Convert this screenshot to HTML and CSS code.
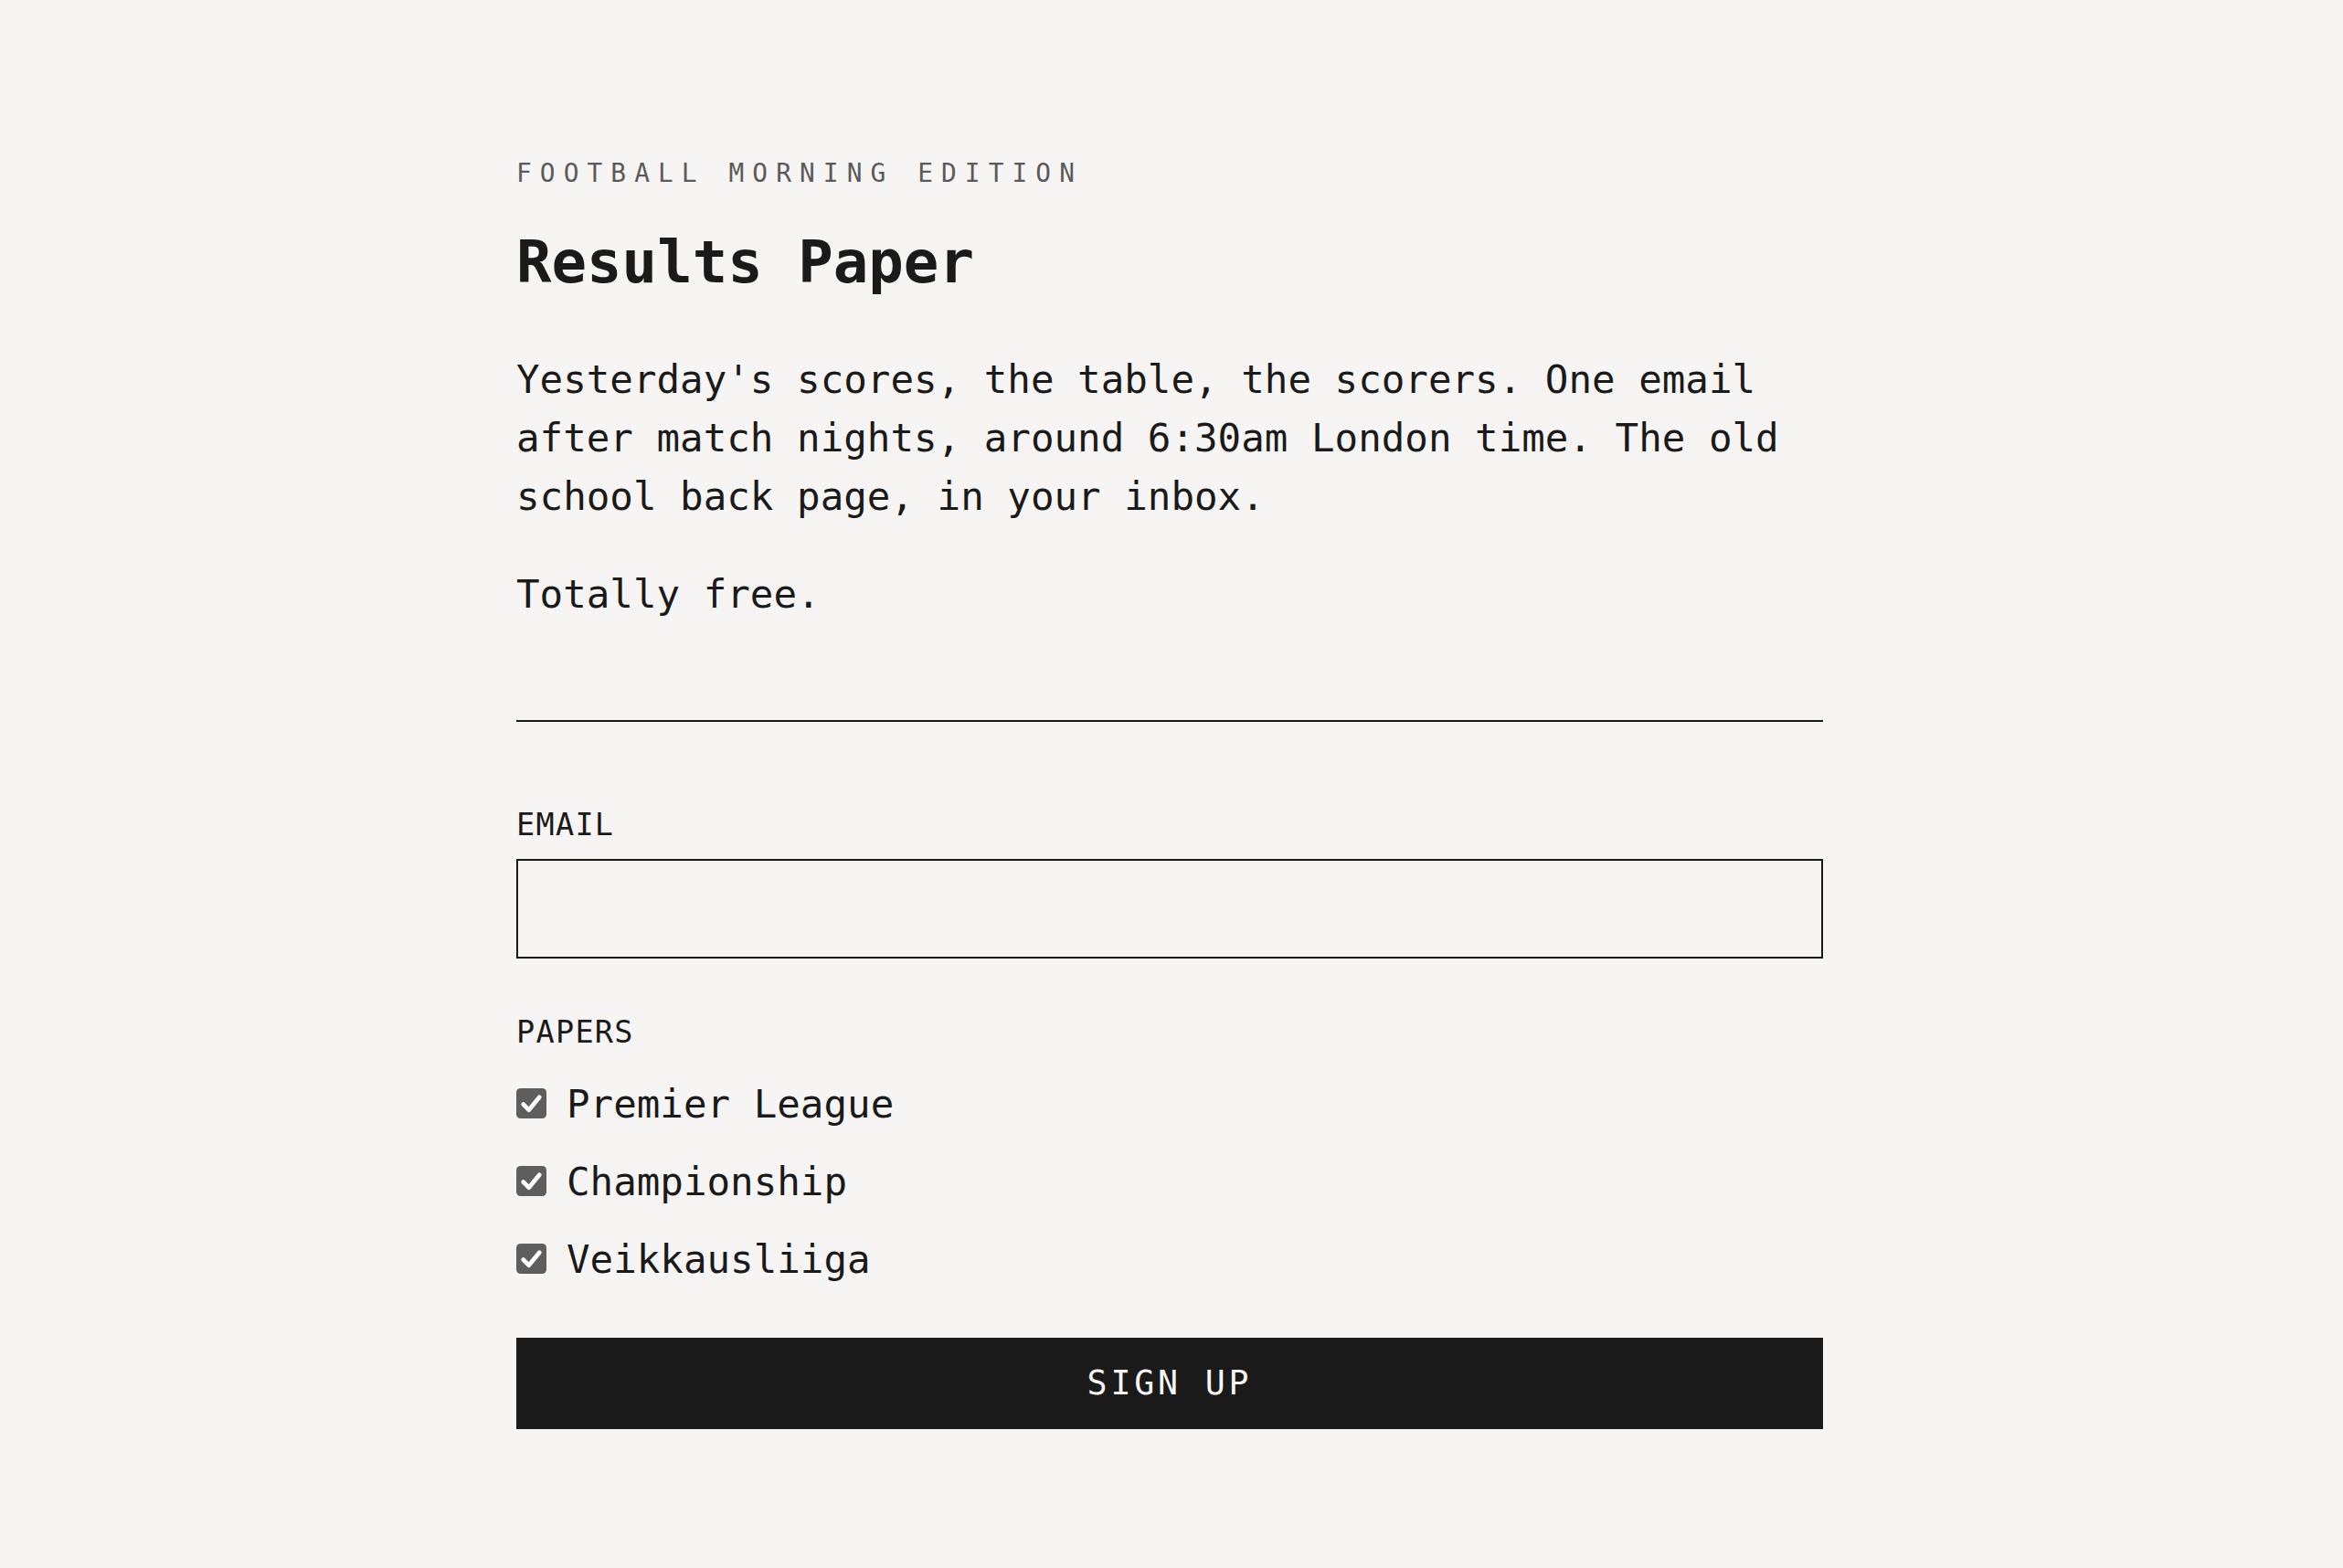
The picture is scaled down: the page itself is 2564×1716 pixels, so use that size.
FILE: index.html
```html
<!DOCTYPE html>
<html lang="en">
<head>
<meta charset="utf-8">
<title>Results Paper</title>
<link rel="stylesheet" href="styles.css">
</head>
<body>
<main class="page">
  <p class="eyebrow">FOOTBALL MORNING EDITION</p>
  <h1 class="title">Results Paper</h1>
  <p class="lede">Yesterday's scores, the table, the scorers. One email after match nights, around 6:30am London time. The old school back page, in your inbox.</p>
  <p class="free">Totally free.</p>
  <hr class="rule">
  <form class="signup">
    <label class="field-label" for="email">EMAIL</label>
    <input class="email" id="email" type="email">
    <div class="field-label papers-label">PAPERS</div>
    <ul class="papers">
      <li class="paper">
        <span class="check"><svg viewBox="0 0 32 32" width="33" height="33"><rect x="0" y="0" width="32" height="32" rx="4.5" fill="#5e5e5e"/><path d="M7.5 17 L13.3 23 L24.5 9.5" fill="none" stroke="#ffffff" stroke-width="4.6" stroke-linecap="round" stroke-linejoin="round"/></svg></span>
        <span class="paper-name">Premier League</span>
      </li>
      <li class="paper">
        <span class="check"><svg viewBox="0 0 32 32" width="33" height="33"><rect x="0" y="0" width="32" height="32" rx="4.5" fill="#5e5e5e"/><path d="M7.5 17 L13.3 23 L24.5 9.5" fill="none" stroke="#ffffff" stroke-width="4.6" stroke-linecap="round" stroke-linejoin="round"/></svg></span>
        <span class="paper-name">Championship</span>
      </li>
      <li class="paper">
        <span class="check"><svg viewBox="0 0 32 32" width="33" height="33"><rect x="0" y="0" width="32" height="32" rx="4.5" fill="#5e5e5e"/><path d="M7.5 17 L13.3 23 L24.5 9.5" fill="none" stroke="#ffffff" stroke-width="4.6" stroke-linecap="round" stroke-linejoin="round"/></svg></span>
        <span class="paper-name">Veikkausliiga</span>
      </li>
    </ul>
    <button class="submit" type="button">SIGN UP</button>
  </form>
</main>
</body>
</html>
```

FILE: styles.css
```css
html, body {
  margin: 0;
  padding: 0;
  background: #f6f5f3;
}

body {
  font-family: "DejaVu Sans Mono", "Liberation Mono", monospace;
  color: #1a1a1a;
  min-height: 1716px;
}

.page {
  width: 1430px;
  margin-left: calc(50% - 717px);
  padding-top: 169px;
  display: flex;
  flex-direction: column;
}

.eyebrow {
  margin: 0;
  font-size: 27.8px;
  line-height: 41.7px;
  letter-spacing: 9.1px;
  color: #5a5a5a;
}

.title {
  margin: 38px 0 0;
  font-size: 64px;
  line-height: 76.8px;
  font-weight: 700;
  color: #1a1a1a;
}

.lede,
.free {
  margin: 0;
  font-size: 42.5px;
  line-height: 64px;
}

.lede {
  margin-top: 58px;
}

.free {
  margin-top: 43px;
}

.rule {
  margin: 105px 0 0;
  border: 0;
  height: 2px;
  background: #1a1a1a;
}

.signup {
  display: flex;
  flex-direction: column;
  margin-top: 88px;
}

.field-label {
  display: block;
  font-size: 33.5px;
  line-height: 50px;
  letter-spacing: 1.3px;
  color: #1a1a1a;
}

.email {
  margin-top: 12px;
  height: 109px;
  box-sizing: border-box;
  border: 2px solid #1a1a1a;
  border-radius: 0;
  background: transparent;
  font-family: inherit;
  font-size: 42.5px;
  padding: 0 20px;
  outline: none;
}

.papers-label {
  margin-top: 56px;
}

.papers {
  list-style: none;
  margin: 22px 0 0;
  padding: 0;
  display: flex;
  flex-direction: column;
  gap: 21px;
}

.paper {
  display: flex;
  align-items: center;
  gap: 22px;
  height: 64px;
}

.check {
  display: flex;
  width: 33px;
  height: 33px;
  margin-top: -3px;
}

.paper-name {
  font-size: 42.5px;
  line-height: 64px;
}

.submit {
  margin-top: 53px;
  height: 100px;
  border: 0;
  border-radius: 0;
  background: #1a1a1a;
  color: #f6f5f3;
  font-family: inherit;
  font-size: 36.6px;
  letter-spacing: 3.8px;
  padding: 0;
  cursor: pointer;
}
```
